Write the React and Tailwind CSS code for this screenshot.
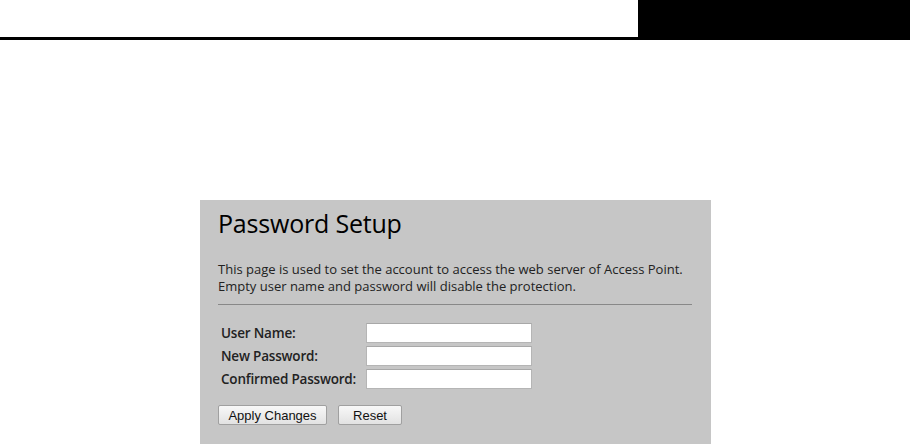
export default function App() {
  return (
    <div className="w-[910px] h-[444px] bg-white overflow-hidden" style={{ fontFamily: '"Open Sans", "Noto Sans", sans-serif' }}>
      <div className="flex h-[40px]">
        <div className="flex-1 border-b-[3px] border-black" />
        <div className="w-[272px] bg-black" />
      </div>
      <div className="ml-[200px] mt-[160px] w-[511px] h-[244px] bg-[#c6c6c6] pl-[18px] pr-[19px] pt-[7px]">
        <h1 className="text-[25px] leading-[33px] font-medium text-black tracking-[-0.2px]">Password Setup</h1>
        <p className="mt-[21px] text-[13px] leading-[17px] text-[#222]">
          This page is used to set the account to access the web server of Access Point.
          <br />
          Empty user name and password will disable the protection.
        </p>
        <div className="mt-[9px] h-px bg-[#888]" />
        <div className="mt-[18px] flex flex-col gap-[3px] pl-[3px]">
          {['User Name:', 'New Password:', 'Confirmed Password:'].map((l) => (
            <div key={l} className="flex items-center h-[20px]">
              <div className="w-[145px] text-[13.5px] font-semibold text-[#222] tracking-[-0.2px]">{l}</div>
              <div className="w-[166px] h-[20px] bg-white border border-[#b5b5b5] border-t-[#a8a8a8]" />
            </div>
          ))}
        </div>
        <div className="mt-[16px] flex gap-[11px]" style={{ fontFamily: '"Liberation Sans", Arial, sans-serif' }}>
          <button className="h-[20px] w-[109px] text-[13px] text-[#111] bg-gradient-to-b from-[#f8f8f8] to-[#e2e2e2] border border-[#a0a0a0] rounded-[2px]">Apply Changes</button>
          <button className="h-[20px] w-[64px] text-[13px] text-[#111] bg-gradient-to-b from-[#f8f8f8] to-[#e2e2e2] border border-[#a0a0a0] rounded-[2px]">Reset</button>
        </div>
      </div>
    </div>
  );
}
